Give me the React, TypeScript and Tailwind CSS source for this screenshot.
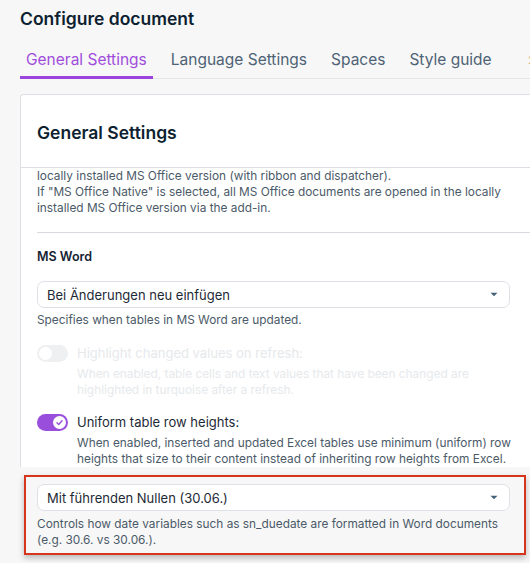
import React from "react";

const font = { fontFamily: "Inter, 'Noto Sans', sans-serif" };

function Caret() {
  return (
    <svg width="8" height="5" viewBox="0 0 8 5" className="shrink-0">
      <path d="M0.5 0.8h7L4 4.2z" fill="#44617a" />
    </svg>
  );
}

function Select({ value }: { value: string }) {
  return (
    <div className="flex h-[27px] items-center justify-between rounded-[7px] border border-[#dde1e6] bg-white pl-[9px] pr-[11px] text-[13px] text-[#1d2a36]">
      <span>{value}</span>
      <Caret />
    </div>
  );
}

function Toggle({ on }: { on: boolean }) {
  if (on) {
    return (
      <div className="flex h-[17px] w-[31px] shrink-0 items-center justify-end rounded-full bg-[#9a4fdc] pr-[2px]">
        <div className="flex h-[13px] w-[13px] items-center justify-center rounded-full bg-white">
          <svg width="9" height="9" viewBox="0 0 10 10">
            <path d="M2.2 5.2l1.9 1.9 3.7-4" fill="none" stroke="#9a4fdc" strokeWidth="1.6" strokeLinecap="round" strokeLinejoin="round" />
          </svg>
        </div>
      </div>
    );
  }
  return (
    <div className="flex h-[17px] w-[31px] shrink-0 items-center rounded-full bg-[#eef0f2] pl-[2px]">
      <div className="h-[13px] w-[13px] rounded-full bg-white" />
    </div>
  );
}

export default function App() {
  const tabs = ["General Settings", "Language Settings", "Spaces", "Style guide"];
  return (
    <div className="h-[563px] w-[530px] overflow-hidden bg-[#f7f7f7]" style={font}>
      <div className="pl-[20px]">
        <h1 className="pt-[7px] text-[17.5px] font-semibold leading-[24px] text-[#0d1f30]">Configure document</h1>
        <div className="mt-[19px] flex gap-[12px] whitespace-nowrap border-b border-[#e4e6e9] text-[15.5px] leading-[20px]">
          {tabs.map((t, i) => (
            <div
              key={t}
              className={
                i === 0
                  ? "-mb-px shrink-0 border-b-[3px] border-[#9b45dc] px-[6px] pb-[6px] text-[#a04ddc]"
                  : "shrink-0 px-[6px] pb-[6px] text-[#4e6275]"
              }
            >
              {t}
            </div>
          ))}
          <div className="shrink-0 pl-[18px] text-[#f0b48a]">›</div>
        </div>

        <div className="mt-[15px] w-[540px] rounded-tl-[4px] border-l border-t border-[#dcdfe3] bg-white">
          <div className="border-b border-[#dcdfe3] px-[16px] pb-[22px] pt-[26px]">
            <h2 className="text-[17.5px] font-semibold leading-[24px] text-[#0d1f30]">General Settings</h2>
          </div>
          <div className="px-[16px] text-[11.85px] leading-[16px] text-[#4b5a68]">
            <div className="border-b border-[#d7dbe0] pb-[16px]">
              <p>locally installed MS Office version (with ribbon and dispatcher).</p>
              <p>If "MS Office Native" is selected, all MS Office documents are opened in the locally</p>
              <p>installed MS Office version via the add-in.</p>
            </div>

            <div className="w-[473px]">
              <div className="pt-[15px] text-[12.5px] font-semibold leading-[18px] text-[#152433]">MS Word</div>
              <div className="mt-[15px]">
                <Select value="Bei Änderungen neu einfügen" />
              </div>
              <p className="mt-[4px]">Specifies when tables in MS Word are updated.</p>

              <div className="mt-[17px] flex gap-[9px]">
                <Toggle on={false} />
                <div className="w-[445px] shrink-0 text-[#e6e9ec]">
                  <div className="text-[13px] leading-[17px]">Highlight changed values on refresh:</div>
                  <p className="mt-[4px] w-[405px]">When enabled, table cells and text values that have been changed are highlighted in turquoise after a refresh.</p>
                </div>
              </div>

              <div className="mt-[16px] flex gap-[9px]">
                <Toggle on={true} />
                <div className="w-[445px] shrink-0">
                  <div className="text-[13px] leading-[17px] text-[#1d2a36]">Uniform table row heights:</div>
                  <p className="mt-[4px] w-[440px]">When enabled, inserted and updated Excel tables use minimum (uniform) row heights that size to their content instead of inheriting row heights from Excel.</p>
                </div>
              </div>
            </div>
          </div>
        </div>

        <div className="ml-[4px] mt-[8px] w-[502px] border-2 border-[#d6361b] px-[11px] pb-[5px] pt-[7px] text-[11.85px] leading-[16px] text-[#4b5a68] shadow-[0_3px_6px_rgba(0,0,0,0.25)]">
          <div className="w-[473px]">
            <Select value="Mit führenden Nullen (30.06.)" />
            <p className="mt-[5px]">Controls how date variables such as sn_duedate are formatted in Word documents (e.g. 30.6. vs 30.06.).</p>
          </div>
        </div>
      </div>
    </div>
  );
}
